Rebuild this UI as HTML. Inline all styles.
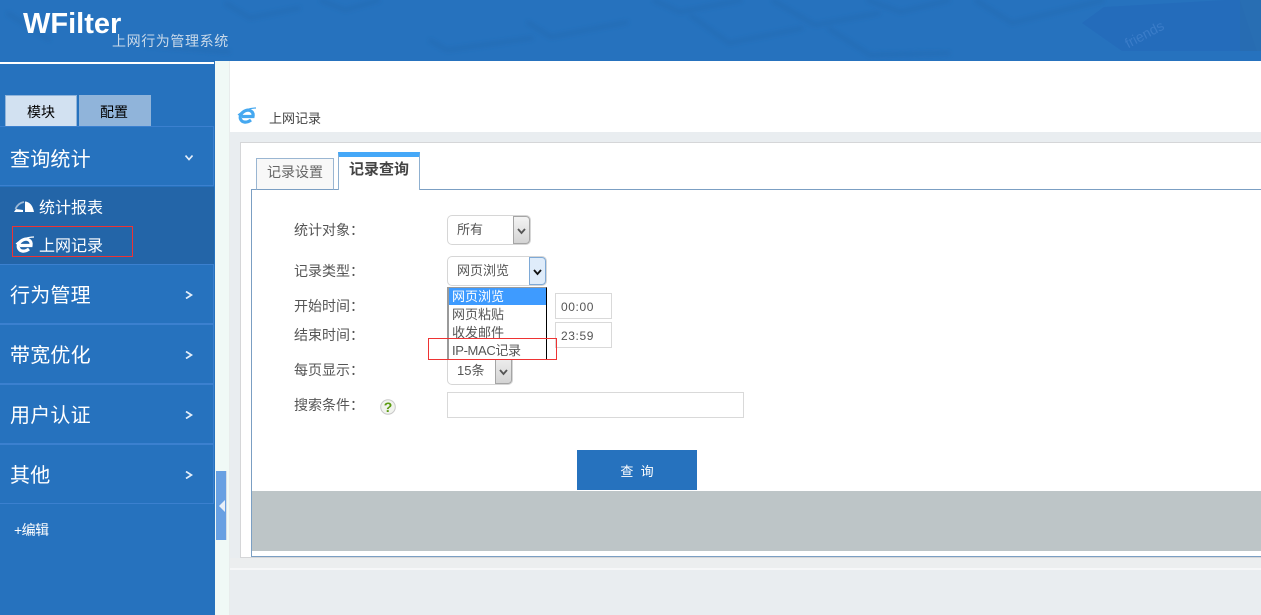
<!DOCTYPE html>
<html lang="zh"><head><meta charset="utf-8"><title>上网记录</title>
<style>
html,body{margin:0;padding:0;width:1261px;height:615px;overflow:hidden;background:#e9edf0}
body{position:relative;font-family:"Liberation Sans","WenQuanYi Zen Hei","Noto Sans CJK SC",sans-serif;font-size:14px;color:#555}
.a{position:absolute;box-sizing:border-box}
.t{position:absolute;white-space:nowrap;line-height:20px}
.m{position:absolute;box-sizing:border-box;left:-2px;width:216px;height:60px;border:1px solid #3b80cf;background:#2672be}
.mt{position:absolute;left:10px;color:#fff;font-size:20px;line-height:26px;white-space:nowrap;letter-spacing:.2px}
.ar{position:absolute;left:185px;width:8px;height:8px}
.sel{position:absolute;box-sizing:border-box;background:#fff;border:1px solid #d6d6d6;border-radius:5px}
.btn{position:absolute;top:0;bottom:0;right:0;background:linear-gradient(#f4f4f4,#d4d4d4);border:1px solid #a5a5a5;border-radius:0 4px 4px 0;box-sizing:border-box}
.inp{position:absolute;box-sizing:border-box;background:#fff;border:1px solid #d9d9d9}
.o{position:absolute;color:#555;font-size:13px;line-height:18px;white-space:nowrap}
</style></head><body>

<!-- header -->
<svg class="a" style="left:0;top:0" width="1261" height="61" viewBox="0 0 1261 61">
<defs><filter id="b" x="-10%" y="-50%" width="120%" height="200%"><feGaussianBlur stdDeviation="2"/></filter></defs>
<rect width="1261" height="61" fill="#2672be"/>
<path d="M1082 23 L1104 7 L1226 0 L1240 0 L1257 51 L1122 51 Z" fill="#246cbb"/>
<rect x="1240" y="0" width="21" height="51" fill="#2a6cae" opacity=".7"/>
<g fill="none" stroke="#2065a8" stroke-width="4" opacity=".35" filter="url(#b)">
<path d="M429 40 L447 50 L533 38"/>
<path d="M527 22 L551 37 L628 22"/>
<path d="M653 0 L680 12 L742 0"/>
<path d="M690 15 L729 43 L803 28"/>
<path d="M772 0 L815 25 L880 13"/>
<path d="M867 0 L901 12 L950 0"/>
<path d="M828 28 L870 55 L950 53"/>
<path d="M975 0 L1012 23 L1104 0"/>
<path d="M320 0 L345 10 L380 0"/>
<path d="M7 13 L50 40 M145 45 L230 52 M225 3 L250 18 L300 8"/>
</g>
<text x="1122" y="36" fill="#3a7cc8" font-size="14" font-family="Liberation Sans" transform="rotate(-28 1150 30)">friends</text>
</svg>
<div class="t" style="left:23px;top:9px;color:#fff;font-weight:bold;font-size:29px;line-height:30px">WFilter</div>
<div class="t" style="left:112px;top:31px;color:#c9d9e9;font-size:14px;letter-spacing:.6px">上网行为管理系统</div>

<!-- sidebar -->
<div class="a" style="left:0;top:61px;width:215px;height:554px;background:#2672be"></div>
<div class="a" style="left:0;top:62px;width:214px;height:2px;background:#fff"></div>
<div class="a" style="left:5px;top:95px;width:72px;height:31px;background:#d2e1f1;border:1px solid #90b4da;border-bottom:0;text-align:center;color:#000;line-height:32px;font-size:14px">模块</div>
<div class="a" style="left:79px;top:95px;width:72px;height:31px;background:#90b4da;text-align:center;color:#000;line-height:34px;font-size:14px;padding-right:2px">配置</div>

<div class="m" style="top:126px"></div>
<div class="mt" style="top:147px">查询统计</div>
<svg class="ar" style="top:154px" viewBox="0 0 8 8"><path d="M.5 1.500 L4 5.500 L7.500 1.500" fill="none" stroke="#e4eefa" stroke-width="1.700"/></svg>

<div class="a" style="left:0;top:187px;width:214px;height:77px;background:#2365a8"></div>
<svg class="a" style="left:14px;top:201px" width="21" height="12" viewBox="0 0 21 12"><path d="M0 11 L9 11 L9 9 L2 8 Z" fill="#fff"/><path d="M1.500 8 Q4 2 10 1" stroke="#9db9d6" fill="none" stroke-width="1.800"/><path d="M11 .5 Q18 1 20 11 L11 11 Z" fill="#fff"/></svg>
<div class="t" style="left:39px;top:199px;color:#fff;font-size:16px">统计报表</div>
<svg class="a" style="left:15px;top:236px" width="20" height="18" viewBox="0 0 20 18">
<path d="M5 9.500 H16 C17 4 12 2.500 9 3.500 C4.500 5 2.500 9 3.500 12 C5 16 10 16 14 13" stroke="#fff" stroke-width="3.200" fill="none"/>
<path d="M1 8 Q9 1 19 1" stroke="#fff" stroke-width="1.200" fill="none"/></svg>
<div class="t" style="left:39px;top:237px;color:#fff;font-size:16px">上网记录</div>
<div class="a" style="left:12px;top:226px;width:121px;height:31px;border:1px solid #ee3333"></div>

<div class="m" style="top:264px"></div>
<div class="mt" style="top:283px">行为管理</div>
<div class="m" style="top:324px"></div>
<div class="mt" style="top:343px">带宽优化</div>
<div class="m" style="top:384px"></div>
<div class="mt" style="top:403px">用户认证</div>
<div class="m" style="top:444px"></div>
<div class="mt" style="top:463px">其他</div>
<svg class="ar" style="top:291px" viewBox="0 0 8 8"><path d="M1 .5 L6.500 4 L1 7.500" fill="none" stroke="#e4eefa" stroke-width="1.700"/></svg>
<svg class="ar" style="top:351px" viewBox="0 0 8 8"><path d="M1 .5 L6.500 4 L1 7.500" fill="none" stroke="#e4eefa" stroke-width="1.700"/></svg>
<svg class="ar" style="top:411px" viewBox="0 0 8 8"><path d="M1 .5 L6.500 4 L1 7.500" fill="none" stroke="#e4eefa" stroke-width="1.700"/></svg>
<svg class="ar" style="top:471px" viewBox="0 0 8 8"><path d="M1 .5 L6.500 4 L1 7.500" fill="none" stroke="#e4eefa" stroke-width="1.700"/></svg>
<div class="t" style="left:14px;top:520px;color:#fff;font-size:14px;letter-spacing:-.6px">+编辑</div>

<!-- splitter strip -->
<div class="a" style="left:215px;top:61px;width:14px;height:554px;background:#f0f9f6"></div>
<div class="a" style="left:229px;top:61px;width:1px;height:554px;background:#e8ecec"></div>
<div class="a" style="left:216px;top:471px;width:10px;height:69px;background:#68a0e2"></div>
<div class="a" style="left:226px;top:471px;width:1px;height:69px;background:#d5dee6"></div>
<svg class="a" style="left:219px;top:500px" width="7" height="12"><path d="M6 0 L6 12 L0 6Z" fill="#e8eff8"/></svg>

<!-- content -->
<div class="a" style="left:230px;top:61px;width:1031px;height:71px;background:#fff"></div>
<svg class="a" style="left:237px;top:107px" width="20" height="18" viewBox="0 0 20 18">
<path d="M5 9.500 H16 C17 4 12 2.500 9 3.500 C4.500 5 2.500 9 3.500 12 C5 16 10 16 14 13" stroke="#45a8f0" stroke-width="3.200" fill="none"/>
<path d="M1 8 Q9 1 19 1" stroke="#45a8f0" stroke-width="1.200" fill="none"/></svg>
<div class="t" style="left:269px;top:109px;font-size:13px;color:#444">上网记录</div>

<div class="a" style="left:240px;top:142px;width:1030px;height:416px;background:#fff;border:1px solid #d5d6d8"></div>
<div class="a" style="left:251px;top:189px;width:1020px;height:368px;border:1px solid #7b9fc3;background:#fff"></div>

<div class="a" style="left:256px;top:158px;width:78px;height:32px;background:#f8f8f8;border:1px solid #9ab6d2;border-bottom:1px solid #7b9fc3;text-align:center;line-height:26px;font-size:14px;color:#666">记录设置</div>
<div class="a" style="left:338px;top:152px;width:82px;height:38px;background:#fff;border:1px solid #8fb0d0;border-top:5px solid #45a8f8;border-bottom:0;text-align:center;line-height:26px;font-weight:bold;font-size:15px;color:#444">记录查询</div>

<div class="t" style="left:294px;top:220px">统计对象：</div>
<div class="t" style="left:294px;top:261px">记录类型：</div>
<div class="t" style="left:294px;top:296px">开始时间：</div>
<div class="t" style="left:294px;top:325px">结束时间：</div>
<div class="t" style="left:294px;top:360px">每页显示：</div>
<div class="t" style="left:294px;top:395px">搜索条件：</div>

<div class="sel" style="left:447px;top:215px;width:84px;height:30px"><div class="btn" style="width:17px"><svg style="position:absolute;left:3px;top:11px" width="9" height="7"><path d="M1 1 L4.500 5 L8 1" fill="none" stroke="#555" stroke-width="1.800"/></svg></div></div>
<div class="t" style="left:457px;top:220px;font-size:13px">所有</div>

<div class="sel" style="left:447px;top:256px;width:100px;height:30px"><div class="btn" style="width:17px;background:#dfecfa;border-color:#7ea9d6"><svg style="position:absolute;left:3px;top:11px" width="9" height="7"><path d="M1 1 L4.500 5 L8 1" fill="none" stroke="#111" stroke-width="1.800"/></svg></div></div>
<div class="t" style="left:457px;top:261px;font-size:13px">网页浏览</div>

<div class="inp" style="left:555px;top:293px;width:57px;height:26px"></div>
<div class="t" style="left:561px;top:297px;font-size:12px;letter-spacing:.6px">00:00</div>
<div class="inp" style="left:555px;top:322px;width:57px;height:26px"></div>
<div class="t" style="left:561px;top:326px;font-size:12px;letter-spacing:.6px">23:59</div>

<div class="sel" style="left:447px;top:350px;width:66px;height:35px"><div class="btn" style="width:17px"><svg style="position:absolute;left:3px;top:17px" width="9" height="7"><path d="M1 1 L4.500 5 L8 1" fill="none" stroke="#555" stroke-width="1.800"/></svg></div></div>
<div class="t" style="left:457px;top:361px;font-size:13px">15条</div>

<!-- dropdown -->
<div class="a" style="left:447px;top:287px;width:100px;height:73px;background:#fff;border-left:2px solid #9a9a9a;border-right:1px solid #000;border-top:1px solid #9a9a9a;border-bottom:1px solid #888"></div>
<div class="a" style="left:449px;top:288px;width:97px;height:17px;background:#3e9bff"></div>
<div class="o" style="left:452px;top:288px;color:#fff">网页浏览</div>
<div class="o" style="left:452px;top:306px">网页粘贴</div>
<div class="o" style="left:452px;top:324px">收发邮件</div>
<div class="o" style="left:452px;top:342px;letter-spacing:-.35px">IP-MAC记录</div>
<div class="a" style="left:428px;top:338px;width:129px;height:22px;border:1px solid #ee3333"></div>

<svg class="a" style="left:380px;top:399px" width="16" height="16" viewBox="0 0 16 16"><circle cx="8" cy="8" r="7.300" fill="#f1f3ee" stroke="#c8c8c8"/><text x="8" y="13" text-anchor="middle" font-family="Liberation Sans" font-weight="bold" font-size="14" fill="#5a9a10">?</text></svg>
<div class="inp" style="left:447px;top:392px;width:297px;height:26px"></div>

<div class="a" style="left:577px;top:450px;width:120px;height:40px;background:#2672be;color:#fff;text-align:center;line-height:43px;font-size:13px">查&nbsp;&nbsp;询</div>
<div class="a" style="left:252px;top:491px;width:1009px;height:60px;background:#bdc5c7"></div>
<div class="a" style="left:230px;top:558px;width:1031px;height:10px;background:#eceeef"></div>
<div class="a" style="left:230px;top:568px;width:1031px;height:2px;background:#f6f7f8"></div>
</body></html>
